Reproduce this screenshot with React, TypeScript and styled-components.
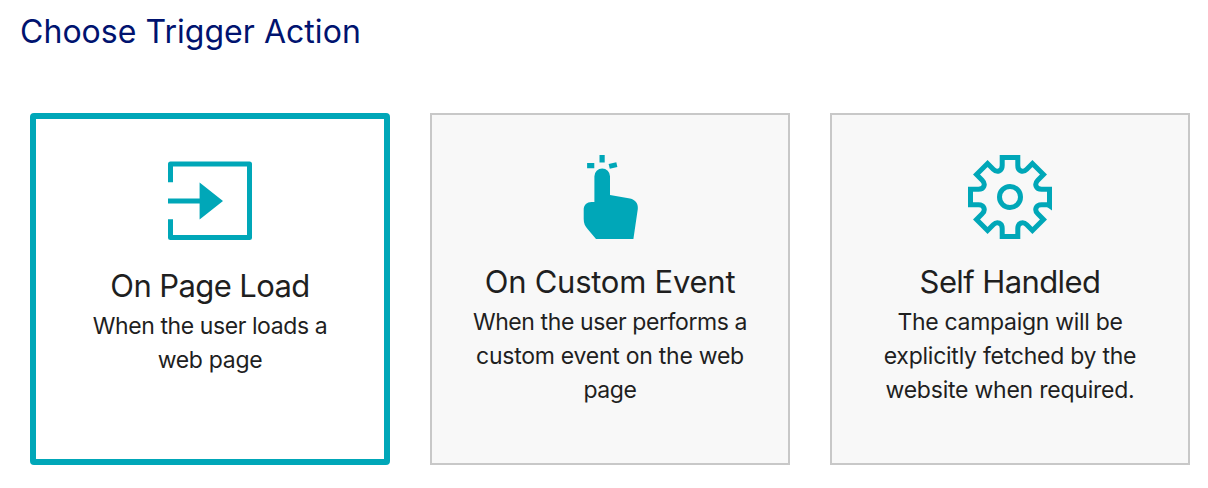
import { useState } from 'react';
import type { ReactNode } from 'react';
import styled, { createGlobalStyle } from 'styled-components';

const TEAL = '#00a7b8';

// one tooth side, valley and next tooth side, repeated around the centre
const gearPath = () => {
  const points: string[] = [];
  const turn = (x: number, y: number, step: number) => {
    const a = (step * Math.PI) / 4;
    const px = 42 + x * Math.cos(a) - y * Math.sin(a);
    const py = 42 + x * Math.sin(a) + y * Math.cos(a);
    return `${px.toFixed(2)} ${py.toFixed(2)}`;
  };
  for (let i = 0; i < 8; i++) {
    points.push(`${i === 0 ? 'M' : 'L'}${turn(-7.8, -39.5, i)}`);
    points.push(`L${turn(7.8, -39.5, i)}`);
    points.push(`L${turn(7.8, -31.5, i)}`);
    points.push(
      `C${turn(7.8, -26, i)} ${turn(-7.8, -26, i + 1)} ${turn(-7.8, -31.5, i + 1)}`
    );
  }
  return `${points.join('')}Z`;
};

const PageLoadIcon = () => (
  <Icon viewBox="0 0 84 84">
    <path
      d="M2.5 23.3V5H81.5V78.5H2.5V60.3"
      fill="none"
      stroke={TEAL}
      strokeWidth="5"
      strokeLinejoin="round"
    />
    <path d="M0 39.5H31.6V23.6L55 42L31.6 60.4V44.5H0Z" fill={TEAL} />
  </Icon>
);

const CustomEventIcon = () => (
  <Icon viewBox="0 0 84 84">
    <path
      d="M26.4 47V21.2A7.8 7.8 0 0 1 42 21.2V40L62 43.5C67.5 44.8 70.3 48.5 69.8 54L65.4 84H28L20 74.5C17 71 15.7 68.5 15.7 64V54.5C15.7 50 19 47 23.5 47Z"
      fill={TEAL}
    />
    <path
      d="M31.5 0H36.7V7.6H31.5ZM19.1 8H26.3V13.2H19.1ZM40.6 8.9L48.3 7.2L49.4 12L41.8 13.7Z"
      fill={TEAL}
    />
  </Icon>
);

const SelfHandledIcon = () => (
  <Icon viewBox="0 0 84 84">
    <path d={gearPath()} fill="none" stroke={TEAL} strokeWidth="5" />
    <path d="M79 50V52L84 55.5V50Z" fill={TEAL} />
    <circle cx="42" cy="42" r="10.5" fill="none" stroke={TEAL} strokeWidth="5" />
  </Icon>
);

interface TextLine {
  text: string;
  spacing: number;
}

interface Trigger {
  id: string;
  title: TextLine;
  lines: TextLine[];
  icon: ReactNode;
}

const triggers: Trigger[] = [
  {
    id: 'load',
    title: { text: 'On Page Load', spacing: -0.6 },
    lines: [
      { text: 'When the user loads a', spacing: -0.42 },
      { text: 'web page', spacing: -0.3 },
    ],
    icon: <PageLoadIcon />,
  },
  {
    id: 'event',
    title: { text: 'On Custom Event', spacing: -0.25 },
    lines: [
      { text: 'When the user performs a', spacing: -0.4 },
      { text: 'custom event on the web', spacing: -0.26 },
      { text: 'page', spacing: -0.4 },
    ],
    icon: <CustomEventIcon />,
  },
  {
    id: 'self',
    title: { text: 'Self Handled', spacing: -0.6 },
    lines: [
      { text: 'The campaign will be', spacing: -0.3 },
      { text: 'explicitly fetched by the', spacing: -0.25 },
      { text: 'website when required.', spacing: -0.23 },
    ],
    icon: <SelfHandledIcon />,
  },
];

const App = () => {
  const [selected, setSelected] = useState('load');

  return (
    <>
      <GlobalStyle />
      <Container>
        <Heading>Choose Trigger Action</Heading>
        <CardList>
          {triggers.map(({ id, title, lines, icon }) => (
            <Card key={id} $selected={selected === id} onClick={() => setSelected(id)}>
              {icon}
              <CardTitle $spacing={title.spacing}>{title.text}</CardTitle>
              {lines.map((line) => (
                <CardLine key={line.text} $spacing={line.spacing}>
                  {line.text}
                </CardLine>
              ))}
            </Card>
          ))}
        </CardList>
      </Container>
    </>
  );
};

export default App;

const GlobalStyle = createGlobalStyle`
  * {
    box-sizing: border-box;
  }

  body {
    margin: 0;
    background-color: #ffffff;
    font-family: Inter, 'Liberation Sans', sans-serif;
  }
`;

const Container = styled.div`
  width: 1208px;
  height: 488px;
  overflow: hidden;
`;

const Heading = styled.h1`
  margin: 0;
  padding: 11px 0 0 20px;
  height: 113px;
  color: #00136f;
  font-size: 32px;
  font-weight: 400;
  line-height: 42px;
  letter-spacing: 0.04px;
  white-space: nowrap;
`;

const CardList = styled.div`
  display: flex;
  gap: 40px;
  padding-left: 30px;
`;

const Card = styled.button<{ $selected: boolean }>`
  display: flex;
  flex-direction: column;
  align-items: center;
  width: 360px;
  height: 352px;
  padding: 40px 0 0;
  border: ${({ $selected }) => ($selected ? `6px solid ${TEAL}` : '2px solid #c8c8c8')};
  border-radius: ${({ $selected }) => ($selected ? '4px' : '0')};
  background-color: ${({ $selected }) => ($selected ? '#ffffff' : '#f8f8f8')};
  color: #1f1f1f;
  font-family: inherit;
  cursor: pointer;
`;

const Icon = styled.svg`
  display: block;
  flex-shrink: 0;
  width: 84px;
  height: 84px;
`;

const CardTitle = styled.span<{ $spacing: number }>`
  margin: 22px 0 2px;
  font-size: 31px;
  line-height: 42px;
  letter-spacing: ${({ $spacing }) => $spacing}px;
  white-space: nowrap;
`;

const CardLine = styled.span<{ $spacing: number }>`
  font-size: 23px;
  line-height: 34px;
  letter-spacing: ${({ $spacing }) => $spacing}px;
  white-space: nowrap;
`;
